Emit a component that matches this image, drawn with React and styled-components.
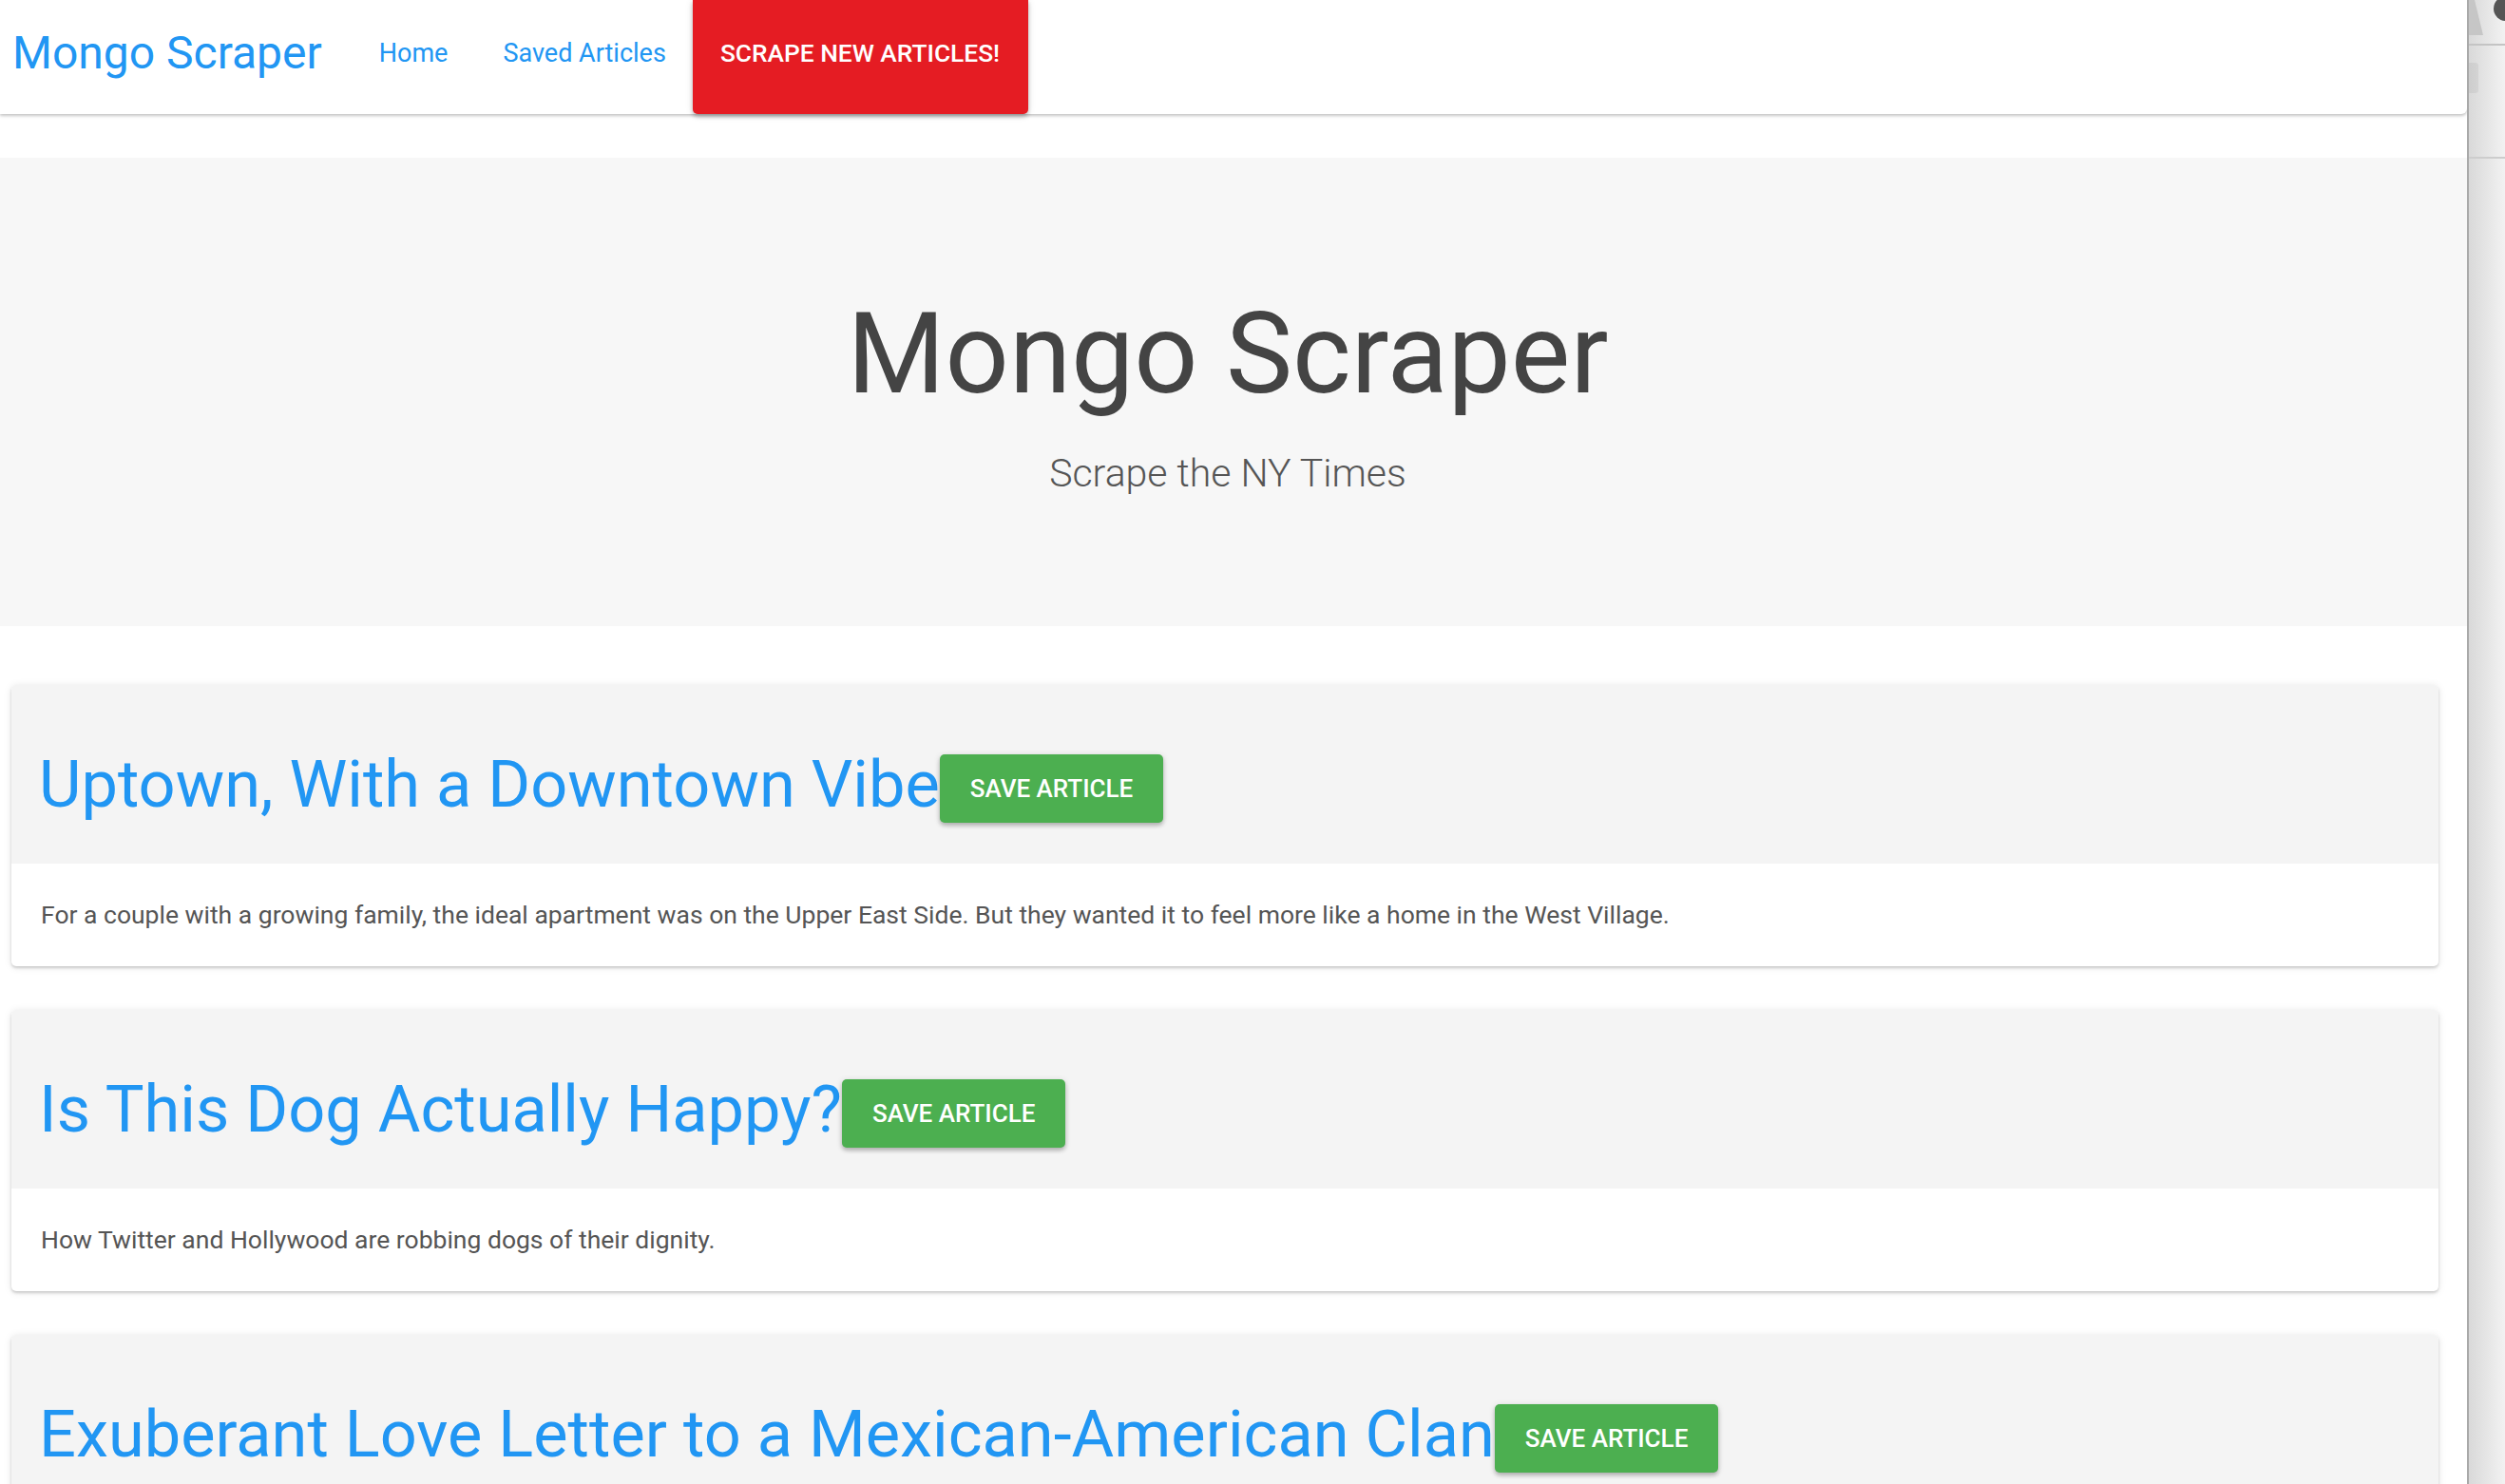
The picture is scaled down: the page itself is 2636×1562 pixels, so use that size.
import React from "react"
import styled, { createGlobalStyle } from "styled-components"

const GlobalStyle = createGlobalStyle`
  html, body {
    margin: 0;
    padding: 0;
    overflow: hidden;
    background: #fff;
  }
  body {
    font-family: Roboto, "Liberation Sans", Arial, sans-serif;
    -webkit-font-smoothing: antialiased;
  }
  * {
    box-sizing: border-box;
  }
`

const Shell = styled.div`
  display: flex;
  height: 100vh;
  overflow: hidden;
`

const Page = styled.main`
  flex: 0 0 2596px;
  overflow: hidden;
  background: #fff;
`

// window edge on the right, part of the screenshot
const SideStrip = styled.aside`
  flex: 1;
  display: flex;
  flex-direction: column;
  border-left: 2px solid #a9a9a9;
  background: linear-gradient(to right, #d9d9d9, #f2f2f2);
`

const StripTop = styled.div`
  height: 48px;
  display: flex;
  justify-content: space-between;
  border-bottom: 2px solid #c4c4c4;
`

const Tab = styled.div`
  width: 15px;
  height: 37px;
  background: #c6c6c6;
  clip-path: polygon(0 0, 40% 0, 100% 100%, 0 100%);
`

const Dot = styled.div`
  width: 26px;
  height: 26px;
  margin-top: -4px;
  margin-right: -14px;
  border-radius: 50%;
  background: #555;
`

const StripMid = styled.div`
  height: 119px;
  border-bottom: 2px solid #cdcdcd;
  padding-top: 18px;
`

const Handle = styled.div`
  width: 10px;
  height: 32px;
  border-radius: 0 3px 3px 0;
  background: rgba(0, 0, 0, 0.05);
`

const Nav = styled.nav`
  height: 120px;
  display: flex;
  align-items: flex-start;
  background: #fff;
  border-radius: 0 0 6px 0;
  box-shadow: 0 2px 3px rgba(0, 0, 0, 0.18), 0 1px 6px rgba(0, 0, 0, 0.08);
  position: relative;
  z-index: 2;
`

const Brand = styled.a`
  padding-left: 13px;
  margin-right: 31px;
  font-size: 48px;
  line-height: 112px;
  color: #2196f3;
  text-decoration: none;
`

const NavLink = styled.a`
  padding: 0 29px;
  font-size: 27px;
  line-height: 112px;
  color: #2196f3;
  text-decoration: none;
`

const ScrapeButton = styled.button`
  height: 120px;
  margin-left: -1px;
  padding: 0 30px 8px 29px;
  border: none;
  border-radius: 0 0 5px 5px;
  background: #e51c23;
  color: #fff;
  font-family: inherit;
  font-size: 26.3px;
  font-weight: 500;
  text-transform: uppercase;
  box-shadow: 0 3px 4px rgba(0, 0, 0, 0.22), 0 1px 8px rgba(0, 0, 0, 0.12);
`

const Hero = styled.header`
  margin-top: 46px;
  padding: 141px 12px 136px 0;
  background: #f7f7f7;
  text-align: center;
`

const HeroTitle = styled.h1`
  margin: 0;
  font-size: 118px;
  font-weight: 400;
  line-height: 132px;
  color: #444;
`

const HeroSub = styled.p`
  margin: 35px 0 0;
  font-size: 41px;
  font-weight: 300;
  line-height: 1.2;
  color: #555;
`

const ArticleList = styled.section`
  display: flex;
  flex-direction: column;
  gap: 46px;
  margin-top: 62px;
  padding: 0 30px 0 12px;
`

const Card = styled.article`
  border-radius: 5px;
  overflow: hidden;
  background: #fff;
  box-shadow: 0 2px 3px rgba(0, 0, 0, 0.16), 0 1px 8px rgba(0, 0, 0, 0.1);
`

const CardHeader = styled.div`
  height: 188px;
  padding: 20px 29px 0;
  display: flex;
  align-items: center;
  background: #f4f4f4;
`

const ArticleTitle = styled.h3`
  margin: 0;
  font-size: 68.5px;
  font-weight: 400;
  line-height: 1.1;
  color: #2196f3;
  white-space: nowrap;
`

const SaveButton = styled.button`
  height: 72px;
  margin-top: 10px;
  padding: 0 32px;
  border: none;
  border-radius: 5px;
  background: #4caf50;
  color: #fff;
  font-family: inherit;
  font-size: 26px;
  font-weight: 500;
  line-height: 72px;
  text-transform: uppercase;
  white-space: nowrap;
  box-shadow: 0 3px 4px rgba(0, 0, 0, 0.22), 0 1px 7px rgba(0, 0, 0, 0.12);
`

const CardBody = styled.div`
  height: 108px;
  padding: 0 31px;
  display: flex;
  align-items: center;
`

const Summary = styled.p`
  margin: 0;
  font-size: 26.5px;
  line-height: 1.5;
  color: #555;
`

const articles = [
  {
    title: "Uptown, With a Downtown Vibe",
    summary:
      "For a couple with a growing family, the ideal apartment was on the Upper East Side. But they wanted it to feel more like a home in the West Village.",
  },
  {
    title: "Is This Dog Actually Happy?",
    summary: "How Twitter and Hollywood are robbing dogs of their dignity.",
  },
  {
    title: "Exuberant Love Letter to a Mexican-American Clan",
    summary: "A family story told with warmth and humor.",
  },
]

const App = () => {
  return (
    <Shell>
      <GlobalStyle />
      <Page>
        <Nav>
          <Brand href="#">Mongo Scraper</Brand>
          <NavLink href="#">Home</NavLink>
          <NavLink href="#">Saved Articles</NavLink>
          <ScrapeButton>Scrape New Articles!</ScrapeButton>
        </Nav>

        <Hero>
          <HeroTitle>Mongo Scraper</HeroTitle>
          <HeroSub>Scrape the NY Times</HeroSub>
        </Hero>

        <ArticleList>
          {articles.map((a) => (
            <Card key={a.title}>
              <CardHeader>
                <ArticleTitle>{a.title}</ArticleTitle>
                <SaveButton>Save Article</SaveButton>
              </CardHeader>
              <CardBody>
                <Summary>{a.summary}</Summary>
              </CardBody>
            </Card>
          ))}
        </ArticleList>
      </Page>

      <SideStrip>
        <StripTop>
          <Tab />
          <Dot />
        </StripTop>
        <StripMid>
          <Handle />
        </StripMid>
      </SideStrip>
    </Shell>
  )
}

export default App
